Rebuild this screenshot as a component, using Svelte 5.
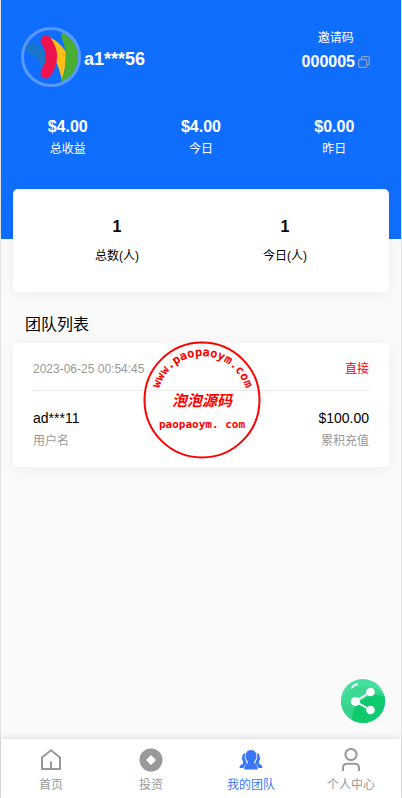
<script>
  let active = 'team';

  let user = { name: 'a1***56', code: '000005' };

  let income = [
    { value: '$4.00', label: '总收益' },
    { value: '$4.00', label: '今日' },
    { value: '$0.00', label: '昨日' }
  ];

  let totals = [
    { value: 1, label: '总数(人)' },
    { value: 1, label: '今日(人)' }
  ];

  let members = [
    { time: '2023-06-25 00:54:45', level: '直接', name: 'ad***11', amount: '$100.00' }
  ];

  let tabs = [
    { id: 'home', label: '首页' },
    { id: 'invest', label: '投资' },
    { id: 'team', label: '我的团队' },
    { id: 'mine', label: '个人中心' }
  ];

  function copyCode() {
    navigator.clipboard?.writeText(user.code);
  }
</script>

<div class="page">
  <header class="top">
    <div class="profile">
      <div class="user">
        <svg class="avatar" viewBox="0 0 60 60" aria-hidden="true">
          <path d="M4 24 Q3 17 8 16 Q18 16 26 28 V46 L21 43 Q18 29 4 24Z" fill="#1976cb" />
          <path d="M28 10 Q39 15 45 25 Q45 40 41 54 Q39 42 33 30Z" fill="#ffbf17" />
          <path d="M40 9 Q40 5 43 6 Q57 14 57 29 Q57 46 43 55 Q40 56 41 51 Q49 30 40 9Z" fill="#48ad32" />
          <path d="M25 14 Q36 29 25 46" fill="none" stroke="#ef124f" stroke-width="11" stroke-linecap="round" />
          <circle cx="30" cy="30" r="28.500" fill="none" stroke="#5898ff" stroke-width="3" />
        </svg>
        <span class="name">{user.name}</span>
      </div>
      <div class="invite">
        <span>邀请码</span>
        <div class="code">
          <b>{user.code}</b>
          <button class="copy" aria-label="复制" on:click={copyCode}>
            <svg viewBox="0 0 12 12">
              <path d="M3.500 3V1.700Q3.500 .7 4.500 .7H10.300Q11.300 .7 11.300 1.700V7.500Q11.300 8.500 10.300 8.500H9" />
              <rect x=".7" y="3.500" width="8" height="7.800" rx="1" />
            </svg>
          </button>
        </div>
      </div>
    </div>
    <div class="income">
      {#each income as item}
        <div>
          <b>{item.value}</b>
          <span>{item.label}</span>
        </div>
      {/each}
    </div>
  </header>

  <section class="totals">
    {#each totals as item}
      <div>
        <b>{item.value}</b>
        <span>{item.label}</span>
      </div>
    {/each}
  </section>

  <main>
    <h2>团队列表</h2>
    <div class="list">
      {#each members as m}
        <article class="member">
          <div class="row head">
            <span class="muted">{m.time}</span>
            <span class="level">{m.level}</span>
          </div>
          <div class="row value">
            <span>{m.name}</span>
            <span>{m.amount}</span>
          </div>
          <div class="row muted">
            <span>用户名</span>
            <span>累积充值</span>
          </div>
        </article>
      {/each}

      <svg class="stamp" viewBox="0 0 118 118">
        <defs>
          <path id="arc" d="M15.300 69.500 A45 45 0 1 1 103.300 69.500" />
        </defs>
        <circle cx="59" cy="59" r="57.500" />
        <text class="curve"><textPath href="#arc" startOffset="50%">www.paopaoym.com</textPath></text>
        <text class="cn" x="59" y="65">泡泡源码</text>
        <text class="site" x="59" y="87">paopaoym. com</text>
      </svg>
    </div>
  </main>

  <button class="share" aria-label="分享">
    <svg viewBox="0 0 44 44">
      <defs>
        <clipPath id="disc"><circle cx="22" cy="22" r="22" /></clipPath>
      </defs>
      <g clip-path="url(#disc)">
        <rect width="44" height="44" fill="#4be0a4" />
        <circle cx="24" cy="34" r="27" fill="#35d48b" />
        <circle cx="35" cy="40" r="24" fill="#0fc96f" />
        <path d="M0 27 Q18 27 31 14 Q36 9 37 4 L20 0 H0Z" fill="#43dc9b" opacity=".6" />
      </g>
      <path d="M11 8.500 Q13 6 16 5.200" stroke="#fff" stroke-width="2" stroke-linecap="round" fill="none" />
      <path d="M29.500 13 L14.500 22.500 L29.500 31" stroke="#fff" stroke-width="2" fill="none" />
      <circle cx="29.500" cy="13" r="4.300" fill="#fff" />
      <circle cx="14.500" cy="22.500" r="4.500" fill="#fff" />
      <circle cx="29.500" cy="31" r="4.300" fill="#fff" />
    </svg>
  </button>

  <nav>
    {#each tabs as tab}
      <a href="#{tab.id}" class:active={active === tab.id} on:click={() => (active = tab.id)}>
        <svg viewBox="0 0 24 24" aria-hidden="true">
          {#if tab.id === 'home'}
            <path class="line" d="M3 9.500 L12 2.200 L21 9.500 V21 H3Z M12 13.500V21" />
          {:else if tab.id === 'invest'}
            <path fill-rule="evenodd" d="M12 .5A11.500 11.500 0 1 1 12 23.500A11.500 11.500 0 1 1 12 .5Z M12 7L7 12L12 17L17 12Z" />
          {:else if tab.id === 'team'}
            <path d="M6.500 5Q3 6 3.300 9.500Q2 10.500 3.700 12.500Q4.500 15 3.500 16Q.5 17 .5 20H4.500Q5 17 8 15.300Q7.500 13.500 6.300 11.500Q5 9 6.500 5Z" />
            <path d="M17.500 5Q21 6 20.700 9.500Q22 10.500 20.300 12.500Q19.500 15 20.500 16Q23.500 17 23.500 20H19.500Q19 17 16 15.300Q16.500 13.500 17.700 11.500Q19 9 17.500 5Z" />
            <path d="M12 2Q17.500 2.300 17.300 8Q18 9.500 16.300 12Q15 13.500 15 15Q19 16.500 18.700 21.500H5.300Q5 16.500 9 15Q9 13.500 7.700 12Q6 9.500 6.700 8Q6.500 2.300 12 2Z" />
          {:else}
            <circle class="line" cx="12" cy="6.500" r="5.600" />
            <path class="line" d="M4 23V20Q4 15.800 8.500 15.800H15.500Q20 15.800 20 20V23" />
          {/if}
        </svg>
        <span>{tab.label}</span>
      </a>
    {/each}
  </nav>
</div>

<style>
  :global(body) {
    margin: 0;
    background: #fafafa;
  }

  .page {
    display: flex;
    flex-direction: column;
    min-height: 100vh;
    box-sizing: border-box;
    border: solid #e2e2e2;
    border-width: 0 1px;
    font-family: "Liberation Sans", "Noto Sans CJK SC", sans-serif;
    font-size: 12px;
    line-height: 20px;
    color: #000;
  }

  .top {
    padding: 27px 0 80px;
    background: #106eff;
    color: #fff;
  }

  .profile {
    display: flex;
    justify-content: space-between;
    padding: 0 31px 0 20px;
  }

  .user {
    display: flex;
    align-items: center;
    gap: 3px;
  }

  .avatar {
    width: 60px;
    height: 60px;
  }

  .name {
    padding-top: 4px;
    font-size: 18px;
    font-weight: bold;
  }

  .invite {
    display: flex;
    flex-direction: column;
    align-items: center;
    gap: 4px;
    padding-top: 1px;
  }

  .code {
    display: flex;
    align-items: center;
    gap: 3px;
  }

  b {
    font-size: 16px;
  }

  button {
    border: 0;
    padding: 0;
    background: none;
    cursor: pointer;
  }

  .copy svg {
    display: block;
    width: 12px;
    height: 12px;
    fill: none;
    stroke: #8d9fbd;
    stroke-width: 1.3;
  }

  .income {
    display: flex;
    margin-top: 30px;
  }

  .income div,
  .totals div {
    flex: 1;
    display: flex;
    flex-direction: column;
    align-items: center;
    gap: 2px;
  }

  .totals {
    display: flex;
    margin: -50px 12px 0;
    padding: 28px 20px 26px;
    background: #fff;
    border-radius: 5px;
    box-shadow: 0 2px 14px rgba(0, 0, 0, 0.06);
  }

  .totals div {
    gap: 9px;
  }

  main {
    flex: 1;
    padding: 21px 12px;
  }

  h2 {
    margin: 0 0 6px;
    padding-left: 12px;
    font-size: 16px;
    line-height: 24px;
    font-weight: normal;
  }

  .list {
    position: relative;
  }

  .member {
    padding: 8px 20px 16px;
    background: #fff;
    box-shadow: 0 2px 14px rgba(0, 0, 0, 0.05);
  }

  .row {
    display: flex;
    justify-content: space-between;
  }

  .head {
    padding: 8px 0 11px;
    margin-bottom: 17px;
    border-bottom: 1px solid #ebebeb;
  }

  .value {
    font-size: 14px;
    margin-bottom: 3px;
  }

  .muted {
    color: #999;
  }

  .level {
    color: #f00;
  }

  .stamp {
    position: absolute;
    top: -2px;
    left: 50%;
    width: 118px;
    height: 118px;
    margin-left: -58px;
    fill: #f00;
    pointer-events: none;
  }

  .stamp circle {
    fill: none;
    stroke: #f00;
    stroke-width: 2;
  }

  .stamp text {
    text-anchor: middle;
    font-family: "DejaVu Sans Mono", "Noto Sans CJK SC", monospace;
    font-weight: bold;
  }

  .stamp .curve {
    font-size: 12px;
  }

  .stamp .cn {
    font-family: "Noto Sans CJK SC", sans-serif;
    font-size: 15px;
    font-style: italic;
  }

  .stamp .site {
    font-size: 11px;
  }

  .share {
    position: fixed;
    right: 17px;
    bottom: 75px;
  }

  .share svg {
    display: block;
    width: 44px;
    height: 44px;
  }

  nav {
    position: sticky;
    bottom: 0;
    display: flex;
    padding: 9px 0 3px;
    background: #fff;
    box-shadow: 0 0 8px rgba(0, 0, 0, 0.15);
  }

  nav a {
    flex: 1;
    display: flex;
    flex-direction: column;
    align-items: center;
    gap: 3px;
    color: #999;
    text-decoration: none;
  }

  nav svg {
    width: 24px;
    height: 24px;
    fill: currentColor;
  }

  nav .line {
    fill: none;
    stroke: currentColor;
    stroke-width: 2;
  }

  nav .active {
    color: #3976f6;
  }
</style>
